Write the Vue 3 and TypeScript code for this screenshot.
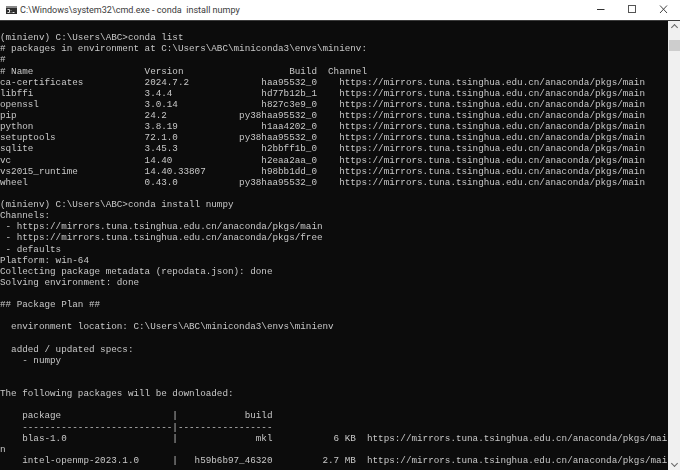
<script setup lang="ts">
const url = 'https://mirrors.tuna.tsinghua.edu.cn/anaconda/pkgs/main'
const row = (name: string, version: string, build: string) =>
  name.padEnd(26) + version.padEnd(21) + build.padStart(10) + '    ' + url
const pyRow = (name: string, version: string) =>
  name.padEnd(26) + version.padEnd(17) + 'py38haa95532_0    ' + url

const title = 'C:\\Windows\\system32\\cmd.exe - conda  install numpy'

const lines: string[] = [
  '',
  '(minienv) C:\\Users\\ABC>conda list',
  '# packages in environment at C:\\Users\\ABC\\miniconda3\\envs\\minienv:',
  '#',
  '# Name'.padEnd(26) + 'Version'.padEnd(26) + 'Build  Channel',
  row('ca-certificates', '2024.7.2', 'haa95532_0'),
  row('libffi', '3.4.4', 'hd77b12b_1'),
  row('openssl', '3.0.14', 'h827c3e9_0'),
  pyRow('pip', '24.2'),
  row('python', '3.8.19', 'h1aa4202_0'),
  pyRow('setuptools', '72.1.0'),
  row('sqlite', '3.45.3', 'h2bbff1b_0'),
  row('vc', '14.40', 'h2eaa2aa_0'),
  row('vs2015_runtime', '14.40.33807', 'h98bb1dd_0'),
  pyRow('wheel', '0.43.0'),
  '',
  '(minienv) C:\\Users\\ABC>conda install numpy',
  'Channels:',
  ' - https://mirrors.tuna.tsinghua.edu.cn/anaconda/pkgs/main',
  ' - https://mirrors.tuna.tsinghua.edu.cn/anaconda/pkgs/free',
  ' - defaults',
  'Platform: win-64',
  'Collecting package metadata (repodata.json): done',
  'Solving environment: done',
  '',
  '## Package Plan ##',
  '',
  '  environment location: C:\\Users\\ABC\\miniconda3\\envs\\minienv',
  '',
  '  added / updated specs:',
  '    - numpy',
  '',
  '',
  'The following packages will be downloaded:',
  '',
  '    package                    |            build',
  '    ---------------------------|-----------------',
  '    blas-1.0                   |              mkl           6 KB  ' + url.slice(0, -1),
  'n',
  '    intel-openmp-2023.1.0      |   h59b6b97_46320         2.7 MB  ' + url.slice(0, -1),
]
</script>

<template>
  <div class="window">
    <header class="titlebar">
      <svg class="app-icon" width="11" height="8" viewBox="0 0 11 8">
        <rect x="0" y="0" width="11" height="8" fill="#2e2e2e" />
        <rect x="0" y="0" width="11" height="2" fill="#8a8a8a" />
        <path d="M1.5 3.5h2v3h-2M5 4v.5M5 6v.5M6.5 6.5h2" stroke="#e4e4e4" stroke-width="1" fill="none" />
      </svg>
      <span class="title">{{ title }}</span>
      <div class="controls">
        <svg width="10" height="10" viewBox="0 0 10 10"><path d="M0 4.5h7.5" stroke="#333" /></svg>
        <svg width="10" height="10" viewBox="0 0 10 10"><rect x="0.5" y="0.5" width="7" height="7" fill="none" stroke="#555" /></svg>
        <svg width="10" height="10" viewBox="0 0 10 10"><path d="M1 0.5l7 7.5M8 0.5l-7 7.5" stroke="#444" /></svg>
      </div>
    </header>
    <div class="body">
      <div class="console">
        <div v-for="(line, i) in lines" :key="i" class="line">{{ line }}</div>
      </div>
      <aside class="scrollbar">
        <span class="arrow up"></span>
        <span class="thumb"></span>
        <span class="arrow down"></span>
      </aside>
    </div>
  </div>
</template>

<style>
html, body { margin: 0; background: #fff; overflow: hidden; }
</style>

<style scoped>
.window {
  width: 680px;
  height: 470px;
  display: flex;
  flex-direction: column;
  overflow: hidden;
  background: #fff;
}
.titlebar {
  height: 20px;
  display: flex;
  align-items: center;
  padding-left: 6px;
  background: #fff;
  border-bottom: 1px solid #3c3c3c;
  flex: none;
}
.app-icon { flex: none; margin-right: 3px; }
.title {
  font: 9.05px Roboto, "Noto Sans", sans-serif;
  color: #3a3a3a;
  white-space: pre;
}
.controls {
  margin-left: auto;
  display: flex;
  gap: 21px;
  padding-right: 11px;
}
.body {
  flex: 1;
  min-height: 0;
  display: flex;
}
.console {
  flex: 1;
  min-width: 0;
  background: #0c0c0c;
  overflow: hidden;
  font-family: "Liberation Mono", monospace;
  font-size: 9.28px;
  line-height: 11.14px;
  color: #c8c8c8;
}
.line { white-space: pre; height: 11.14px; filter: blur(0.3px); }
.scrollbar {
  width: 12px;
  flex: none;
  background: #f0f0f0;
  position: relative;
}
.thumb {
  position: absolute;
  top: 19px;
  left: 1px;
  width: 11px;
  height: 11px;
  background: #cdcdcd;
}
.arrow {
  position: absolute;
  left: 4px;
  width: 4px;
  height: 4px;
  border-left: 1px solid #666;
  border-top: 1px solid #666;
}
.arrow.up { top: 4px; transform: rotate(45deg); }
.arrow.down { bottom: 4px; transform: rotate(225deg); }
</style>
